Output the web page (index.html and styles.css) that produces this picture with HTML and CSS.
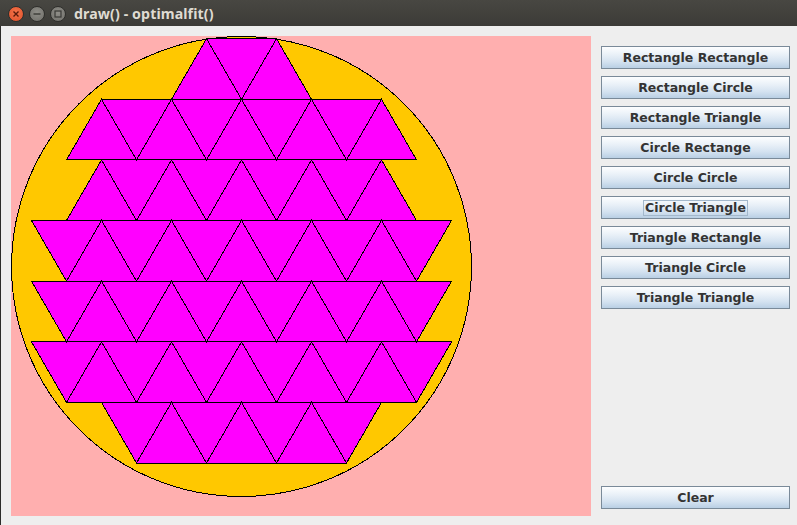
FILE: index.html
```html
<!DOCTYPE html>
<html>
<head>
<meta charset="utf-8">
<link rel="stylesheet" href="styles.css">
</head>
<body>
<div class="window">
  <div class="titlebar">
    <div class="wbtns">
      <span class="wbtn close"><svg width="8" height="8" viewBox="0 0 8 8"><path d="M1.5 1.5 L6.5 6.5 M6.5 1.5 L1.5 6.5" stroke="#5a1a0a" stroke-width="1.4"/></svg></span>
      <span class="wbtn"><svg width="8" height="8" viewBox="0 0 8 8"><path d="M0.5 4 H7.5" stroke="#3a3a36" stroke-width="1.4"/></svg></span>
      <span class="wbtn"><svg width="8" height="8" viewBox="0 0 8 8"><rect x="1" y="1" width="6" height="6" fill="none" stroke="#3a3a36" stroke-width="1.2"/></svg></span>
    </div>
    <div class="title">draw() - optimalfit()</div>
  </div>
  <div class="content">
    <svg class="canvas" width="580" height="480" viewBox="0 0 580 480" shape-rendering="crispEdges">
      <rect x="0" y="0" width="580" height="480" fill="#ffafaf"/>
      <circle cx="230.5" cy="230.5" r="230" fill="#ffc800" stroke="#000" stroke-width="1"/>
      <g fill="#ff00ff" stroke="#000" stroke-width="1" stroke-linejoin="miter">
        <polygon points="160.5,63.3 195.5,2.7 265.5,2.7 300.5,63.3"/>
        <polygon points="55.5,123.9 90.5,63.3 370.5,63.3 405.5,123.9"/>
        <polygon points="55.5,184.5 90.5,123.9 370.5,123.9 405.5,184.5"/>
        <polygon points="20.5,184.5 440.5,184.5 405.5,245.2 55.5,245.2"/>
        <polygon points="20.5,245.2 440.5,245.2 405.5,305.8 55.5,305.8"/>
        <polygon points="20.5,305.8 440.5,305.8 405.5,366.4 55.5,366.4"/>
        <polygon points="90.5,366.4 370.5,366.4 335.5,427 125.5,427"/>
      </g>
      <g fill="none" stroke="#000" stroke-width="1">
        <polyline points="160.5,63.3 195.5,2.7 230.5,63.3 265.5,2.7 300.5,63.3"/>
        <polyline points="55.5,123.9 90.5,63.3 125.5,123.9 160.5,63.3 195.5,123.9 230.5,63.3 265.5,123.9 300.5,63.3 335.5,123.9 370.5,63.3 405.5,123.9"/>
        <polyline points="55.5,184.5 90.5,123.9 125.5,184.5 160.5,123.9 195.5,184.5 230.5,123.9 265.5,184.5 300.5,123.9 335.5,184.5 370.5,123.9 405.5,184.5"/>
        <polyline points="20.5,184.5 55.5,245.2 90.5,184.5 125.5,245.2 160.5,184.5 195.5,245.2 230.5,184.5 265.5,245.2 300.5,184.5 335.5,245.2 370.5,184.5 405.5,245.2 440.5,184.5"/>
        <polyline points="20.5,245.2 55.5,305.8 90.5,245.2 125.5,305.8 160.5,245.2 195.5,305.8 230.5,245.2 265.5,305.8 300.5,245.2 335.5,305.8 370.5,245.2 405.5,305.8 440.5,245.2"/>
        <polyline points="20.5,305.8 55.5,366.4 90.5,305.8 125.5,366.4 160.5,305.8 195.5,366.4 230.5,305.8 265.5,366.4 300.5,305.8 335.5,366.4 370.5,305.8 405.5,366.4 440.5,305.8"/>
        <polyline points="90.5,366.4 125.5,427 160.5,366.4 195.5,427 230.5,366.4 265.5,427 300.5,366.4 335.5,427 370.5,366.4"/>
      </g>
    </svg>
    <div class="buttons">
      <button class="btn">Rectangle Rectangle</button>
      <button class="btn">Rectangle Circle</button>
      <button class="btn">Rectangle Triangle</button>
      <button class="btn">Circle Rectange</button>
      <button class="btn">Circle Circle</button>
      <button class="btn"><span class="focus">Circle Triangle</span></button>
      <button class="btn">Triangle Rectangle</button>
      <button class="btn">Triangle Circle</button>
      <button class="btn">Triangle Triangle</button>
      <button class="btn clear">Clear</button>
    </div>
  </div>
</div>
</body>
</html>
```

FILE: styles.css
```css
html, body {
  margin: 0;
  padding: 0;
  background: #eeeeee;
}
.window {
  width: 797px;
  height: 525px;
  display: flex;
  flex-direction: column;
  overflow: hidden;
}
.titlebar {
  height: 26px;
  flex: none;
  background: linear-gradient(#484742, #3c3b37);
  display: flex;
  align-items: center;
  padding-left: 8px;
  box-sizing: border-box;
}
.wbtns {
  display: flex;
  gap: 5px;
  margin-top: 1px;
}
.wbtn {
  width: 14px;
  height: 14px;
  border-radius: 50%;
  background: radial-gradient(circle at 50% 40%, #8f8e88, #6f6e69);
  border: 0.5px solid #2f2f2c;
  display: flex;
  align-items: center;
  justify-content: center;
}
.wbtn.close {
  background: radial-gradient(circle at 50% 40%, #f5744a, #e0502a);
}
.title {
  margin-left: 8px;
  font-family: "Noto Sans", "DejaVu Sans", sans-serif;
  font-weight: bold;
  font-size: 14.2px;
  color: #dfdbd2;
  letter-spacing: 0.1px;
}
.content {
  flex: 1;
  display: flex;
  gap: 10px;
  padding: 10px 0 0 10px;
  border-left: 1px solid #2c2c2a;
}
.canvas {
  display: block;
  flex: none;
}
.buttons {
  width: 189px;
  height: 480px;
  box-sizing: border-box;
  padding: 10px 0 7px;
  display: flex;
  flex-direction: column;
  gap: 7px;
}
.btn {
  height: 23px;
  width: 189px;
  margin: 0;
  padding: 0;
  border: 1px solid #7a8a99;
  border-radius: 0;
  background: linear-gradient(#fdfeff 0%, #eaf1f8 35%, #d4e2f0 70%, #b9cfe4 100%);
  font-family: "DejaVu Sans", sans-serif;
  font-weight: bold;
  font-size: 12.5px;
  color: #333333;
  display: flex;
  align-items: center;
  justify-content: center;
}
.focus {
  border: 1px solid #a3b8cc;
  padding: 0 1px;
  line-height: 14px;
}
.clear {
  margin-top: auto;
}
```
